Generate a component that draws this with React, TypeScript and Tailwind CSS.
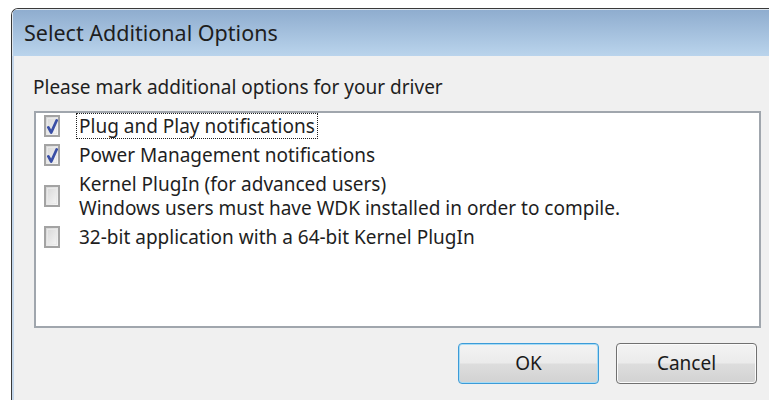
import { useState } from "react";

type Option = { id: string; lines: string[]; checked: boolean; focused?: boolean };

const OPTIONS: Option[] = [
  { id: "pnp", lines: ["Plug and Play notifications"], checked: true, focused: true },
  { id: "power", lines: ["Power Management notifications"], checked: true },
  {
    id: "kp",
    lines: ["Kernel PlugIn (for advanced users)", "Windows users must have WDK installed in order to compile."],
    checked: false,
  },
  { id: "kp32", lines: ["32-bit application with a 64-bit Kernel PlugIn"], checked: false },
];

function CheckBox({ checked }: { checked: boolean }) {
  return (
    <span className="relative flex h-[22px] w-[16px] shrink-0 items-center justify-center border-2 border-[#a3a3a3] bg-gradient-to-br from-[#d6d6d6] to-[#f7f7f7]">
      <span className="absolute inset-[1px] border border-[#e9e9e9]" />
      {checked && (
        <svg viewBox="0 0 12 18" className="relative h-[17px] w-[11px]">
          <path d="M1.5 10 L4.6 15.5 L10.5 2.5" fill="none" stroke="#3a4fa6" strokeWidth="3" strokeLinejoin="round" strokeLinecap="round" />
        </svg>
      )}
    </span>
  );
}

function Win7Button({ label, focused }: { label: string; focused?: boolean }) {
  return (
    <button
      type="button"
      className={[
        "h-[41px] w-[141px] rounded-[4px] border bg-[linear-gradient(#f3f3f3_0%,#ebebeb_48%,#dddddd_52%,#d2d2d2_100%)] text-[19px] text-[#1a1a1a]",
        focused ? "border-[#3c9bd8] shadow-[inset_0_0_0_1px_#a8dcf5]" : "border-[#707070] shadow-[inset_0_0_0_1px_#fbfbfb]",
      ].join(" ")}
    >
      {label}
    </button>
  );
}

export default function App() {
  const [opts, setOpts] = useState(OPTIONS);

  const toggle = (id: string) =>
    setOpts(list => list.map(o => (o.id === id ? { ...o, checked: !o.checked } : o)));

  return (
    <div
      className="h-[400px] w-[769px] overflow-hidden bg-white pl-[11px] pt-[8px]"
      style={{ fontFamily: '"Noto Sans", "Open Sans", Arial, sans-serif' }}
    >
      <div className="flex h-[400px] w-[780px] flex-col overflow-hidden rounded-tl-[7px] border-l border-t border-[#3a3a3a]">
        {/* Title bar */}
        <div className="flex h-[47px] shrink-0 items-center border-t border-l border-[#dde6ef] bg-gradient-to-b from-[#8fadcf] to-[#bad4ec] pl-[11px]">
          <span className="text-[21.5px] text-[#1e1e1e]">Select Additional Options</span>
        </div>

        {/* Client area */}
        <div className="flex flex-1 flex-col border-l-2 border-[#c5d7ea] bg-[#f0f0f0] pt-[18px]">
          <p className="pl-[19px] text-[19px] leading-[26px] text-[#1e1e1e]">
            Please mark additional options for your driver
          </p>

          <div className="ml-[20px] mt-[11px] flex h-[217px] w-[727px] flex-col gap-[3px] border-2 border-[#a0a6ad] bg-white">
            {opts.map(o => (
              <label key={o.id} className="flex cursor-default items-center pl-[8px]" onClick={() => toggle(o.id)}>
                <CheckBox checked={o.checked} />
                <span
                  className={[
                    "ml-[16px] px-[2px] text-[19px] leading-[24px] text-[#1e1e1e]",
                    o.focused ? "border border-dotted border-[#202020]" : "border border-transparent",
                  ].join(" ")}
                >
                  {o.lines.map(l => (
                    <span key={l} className="block">
                      {l}
                    </span>
                  ))}
                </span>
              </label>
            ))}
          </div>

          <div className="mt-[15px] flex w-[743px] justify-end gap-[17px]">
            <Win7Button label="OK" focused />
            <Win7Button label="Cancel" />
          </div>
        </div>
      </div>
    </div>
  );
}
